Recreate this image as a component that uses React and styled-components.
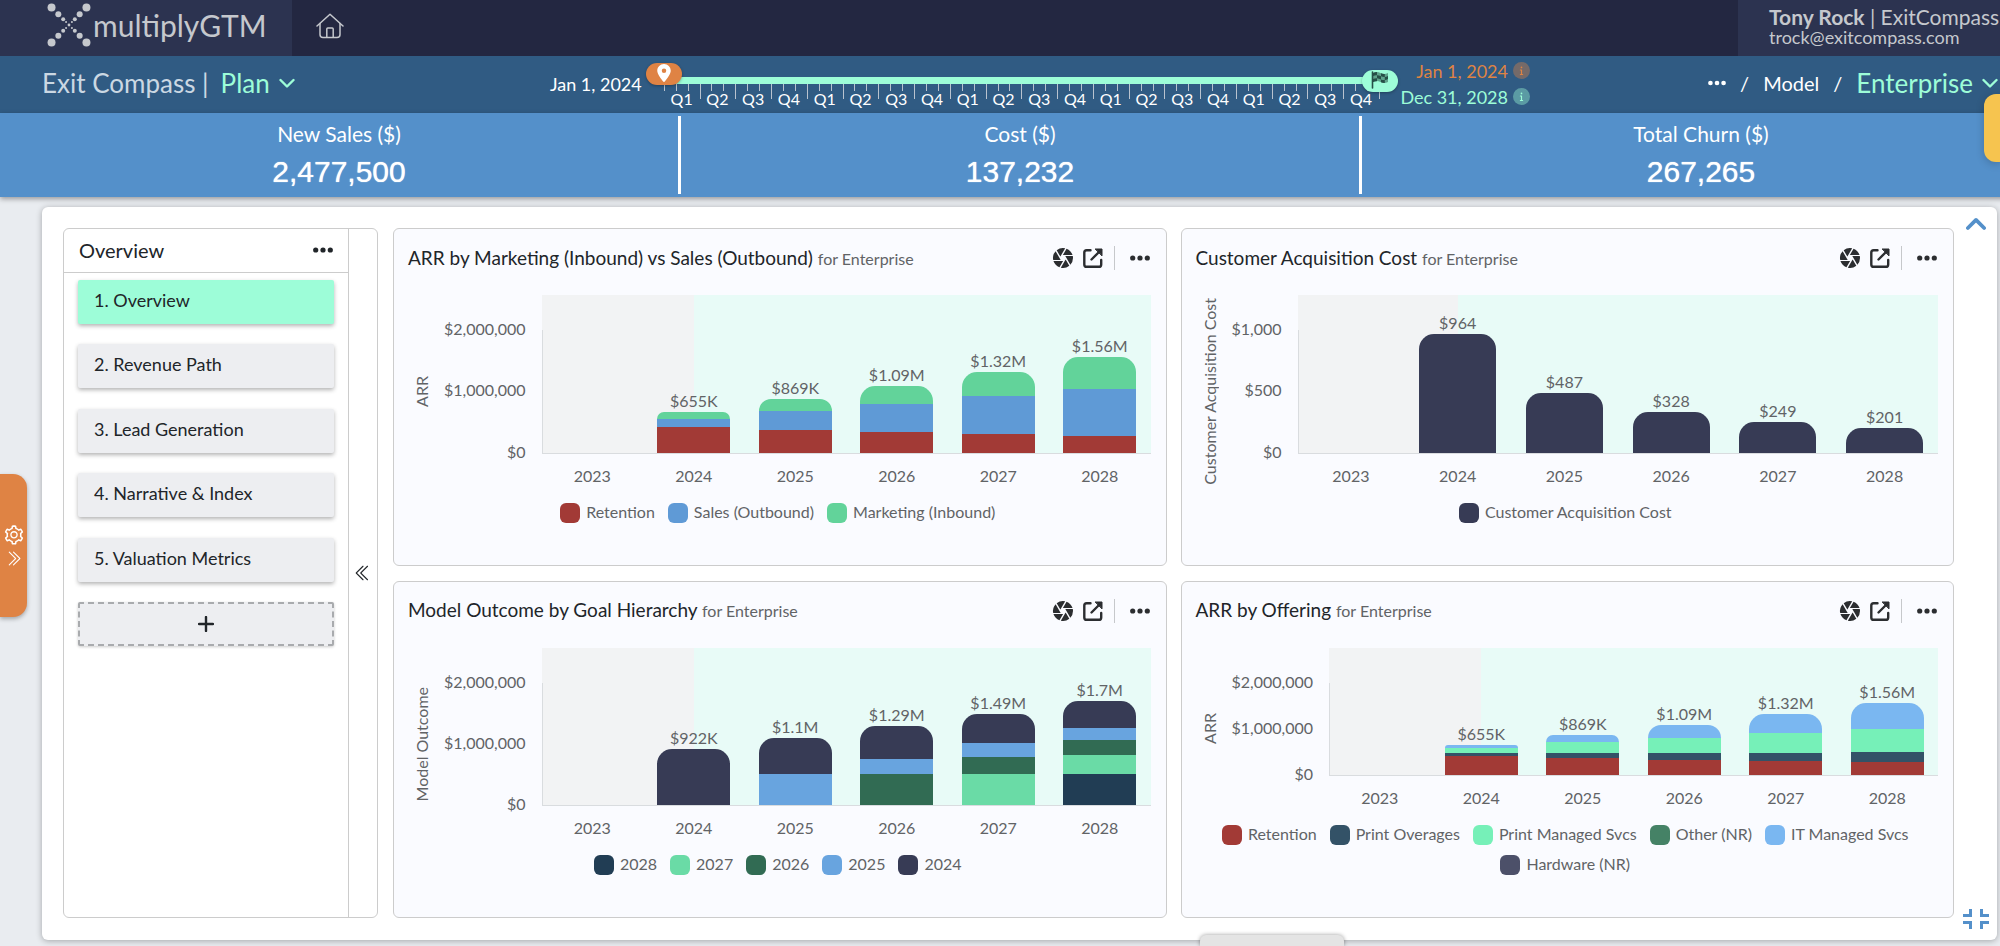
import React from 'react'
import styled, { createGlobalStyle } from 'styled-components'
import { AiOutlineSetting } from 'react-icons/ai'
import { BsChevronDoubleLeft, BsChevronDoubleRight } from 'react-icons/bs'
import { FaInfo, FaLocationDot } from 'react-icons/fa6'
import { MdCamera } from 'react-icons/md'

const quarters = Array.from({ length: 20 }, (_, i) => `Q${(i % 4) + 1}`)
const years = ['2023', '2024', '2025', '2026', '2027', '2028']

const stats = [
  { label: 'New Sales ($)', value: '2,477,500' },
  { label: 'Cost ($)', value: '137,232' },
  { label: 'Total Churn ($)', value: '267,265' },
]

const pages = ['1. Overview', '2. Revenue Path', '3. Lead Generation', '4. Narrative & Index', '5. Valuation Metrics']

// stacks are listed bottom to top, in the unit of `max`
const charts = [
  {
    title: 'ARR by Marketing (Inbound) vs Sales (Outbound)',
    axis: 'ARR',
    ticks: ['$2,000,000', '$1,000,000', '$0'],
    max: 2000,
    series: [
      { name: 'Retention', color: '#a23a36' },
      { name: 'Sales (Outbound)', color: '#5f9ad6' },
      { name: 'Marketing (Inbound)', color: '#62d39a' },
    ],
    bars: [
      null,
      { label: '$655K', stack: [410, 143, 102] },
      { label: '$869K', stack: [374, 298, 197] },
      { label: '$1.09M', stack: [336, 455, 299] },
      { label: '$1.32M', stack: [304, 612, 404] },
      { label: '$1.56M', stack: [276, 764, 520] },
    ],
  },
  {
    title: 'Customer Acquisition Cost',
    axis: 'Customer Acquisition Cost',
    ticks: ['$1,000', '$500', '$0'],
    max: 1000,
    series: [{ name: 'Customer Acquisition Cost', color: '#373b55' }],
    bars: [
      null,
      { label: '$964', stack: [964] },
      { label: '$487', stack: [487] },
      { label: '$328', stack: [328] },
      { label: '$249', stack: [249] },
      { label: '$201', stack: [201] },
    ],
  },
  {
    title: 'Model Outcome by Goal Hierarchy',
    axis: 'Model Outcome',
    ticks: ['$2,000,000', '$1,000,000', '$0'],
    max: 2000,
    series: [
      { name: '2028', color: '#213d54' },
      { name: '2027', color: '#6adba6' },
      { name: '2026', color: '#316b53' },
      { name: '2025', color: '#68a4df' },
      { name: '2024', color: '#373b55' },
    ],
    bars: [
      null,
      { label: '$922K', stack: [0, 0, 0, 0, 922] },
      { label: '$1.1M', stack: [0, 0, 0, 505, 595] },
      { label: '$1.29M', stack: [0, 0, 502, 248, 540] },
      { label: '$1.49M', stack: [0, 505, 272, 228, 485] },
      { label: '$1.7M', stack: [505, 305, 244, 201, 445] },
    ],
  },
  {
    title: 'ARR by Offering',
    axis: 'ARR',
    ticks: ['$2,000,000', '$1,000,000', '$0'],
    max: 2000,
    series: [
      { name: 'Retention', color: '#a23a36' },
      { name: 'Print Overages', color: '#335267' },
      { name: 'Print Managed Svcs', color: '#76f0b8' },
      { name: 'Other (NR)', color: '#458266' },
      { name: 'IT Managed Svcs', color: '#7ab7f1' },
      { name: 'Hardware (NR)', color: '#4c5069' },
    ],
    bars: [
      null,
      { label: '$655K', stack: [410, 60, 115, 0, 70, 0] },
      { label: '$869K', stack: [375, 95, 237, 0, 162, 0] },
      { label: '$1.09M', stack: [332, 151, 317, 0, 290, 0] },
      { label: '$1.32M', stack: [303, 180, 417, 0, 420, 0] },
      { label: '$1.56M', stack: [274, 216, 498, 0, 572, 0] },
    ],
  },
]

const logoDots = [
  [18, 4],
  [11, 3],
  [6, 2],
  [3, 1],
]

const Logo = () => (
  <svg width="44" height="44" viewBox="-22 -22 44 44" fill="currentColor" aria-hidden="true">
    <circle r="1.4" />
    {logoDots.map(([d, r]) =>
      [[-1, -1], [1, -1], [-1, 1], [1, 1]].map(([x, y]) => (
        <circle key={`${d}${x}${y}`} cx={x * d * 0.97} cy={y * d * 0.97} r={r} />
      ))
    )}
  </svg>
)

const HouseIcon = () => (
  <svg width="28" height="26" viewBox="0 0 28 26" fill="none" stroke="currentColor" strokeWidth="1.5" strokeLinecap="round" strokeLinejoin="round">
    <path d="M1 13 14 1.200 27 13" />
    <path d="M4 10.500V21.500Q4 24.500 7 24.500H21Q24 24.500 24 21.500V10.500" />
    <path d="M10.800 24V16Q10.800 15 11.800 15H16.200Q17.200 15 17.200 16V24" />
  </svg>
)

const Chevron = ({ size = 16, up = false, weight = 2.4 }) => (
  <svg width={size} height={size} viewBox="0 0 16 16" fill="none" stroke="currentColor" strokeWidth={weight} strokeLinecap="round" strokeLinejoin="round">
    <path d={up ? 'M1.500 12 8 5.500 14.500 12' : 'M1.500 5 8 11.500 14.500 5'} />
  </svg>
)

const Dots = ({ width = 20 }) => (
  <svg width={width} height="6" viewBox="0 0 20 6" fill="currentColor">
    <circle cx="2.700" cy="3" r="2.600" />
    <circle cx="10" cy="3" r="2.600" />
    <circle cx="17.300" cy="3" r="2.600" />
  </svg>
)

const OpenIcon = () => (
  <svg width="20" height="20" viewBox="0 0 20 20" fill="none" stroke="currentColor" strokeWidth="2.400" strokeLinecap="round">
    <path d="M7.500 2.200H3.700Q1.300 2.200 1.300 4.600V16.400Q1.300 18.800 3.700 18.800H15.800Q18.200 18.800 18.200 16.400V12" />
    <path d="M8.500 11.500 16 4" />
    <path d="M12.500 1H19V7.500Z" fill="currentColor" strokeWidth="1" strokeLinejoin="round" />
  </svg>
)

const FlagIcon = () => (
  <svg width="18" height="18" viewBox="0 0 18 18" aria-hidden="true">
    <path d="M2 2Q6 0 9.500 2T17 2V11Q13 13 9.500 11T2 11Z" fill="#5fa48c" />
    <path d="M2 2Q4 1 6 1V4.200Q4 4 2 5ZM10 2.200Q12 3.200 13.800 3V6Q12 6.200 10 5.300ZM6 4.200Q8 4.400 10 5.300V8.400Q8 7.500 6 7.300ZM13.800 6Q15.500 5.800 17 5V8Q15.500 8.900 13.800 9ZM2 8Q4 7.200 6 7.300V10.300Q4 10.200 2 11ZM10 8.400Q12 9.300 13.800 9V12Q12 12.200 10 11.300Z" fill="#264f47" />
    <path d="M1.500 1V17" stroke="#264f47" strokeWidth="1.600" strokeLinecap="round" />
  </svg>
)

const CompressIcon = () => (
  <svg width="26" height="20" viewBox="0 0 26 20" fill="none" stroke="currentColor" strokeWidth="3">
    <path d="M0 6.500H7.500V0M26 6.500H18.500V0M0 13.500H7.500V20M26 13.500H18.500V20" />
  </svg>
)

const ChartCard = ({ chart }) => (
  <Card>
    <CardHeader>
      <CardTitle>
        {chart.title} <small>for Enterprise</small>
      </CardTitle>
      <IconButton aria-label="Snapshot"><MdCamera size={24} /></IconButton>
      <IconButton aria-label="Open"><OpenIcon /></IconButton>
      <Divider />
      <IconButton aria-label="More"><Dots /></IconButton>
    </CardHeader>
    <Chart>
      <AxisTitle><span>{chart.axis}</span></AxisTitle>
      <Ticks>
        {chart.ticks.map(tick => <span key={tick}>{tick}</span>)}
      </Ticks>
      <Plot>
        {chart.bars.map((bar, i) => (
          <Column key={years[i]}>
            {bar && (
              <>
                <span>{bar.label}</span>
                <Stack style={{ height: `${(bar.stack.reduce((a, b) => a + b, 0) / chart.max) * 100}%` }}>
                  {bar.stack.map((value, s) => value > 0 && (
                    <Segment key={s} $color={chart.series[s].color} style={{ flexGrow: value }} />
                  ))}
                </Stack>
              </>
            )}
          </Column>
        ))}
      </Plot>
      <Years>
        {years.map(year => <span key={year}>{year}</span>)}
      </Years>
    </Chart>
    <Legend>
      {chart.series.map(({ name, color }) => (
        <LegendItem key={name} $color={color}>{name}</LegendItem>
      ))}
    </Legend>
  </Card>
)

const App = () => {
  return (
    <Page>
      <GlobalStyle />

      <TopBar>
        <Brand><Logo />multiplyGTM</Brand>
        <HomeLink href="#" aria-label="Home"><HouseIcon /></HomeLink>
        <User>
          <p><b>Tony Rock</b> | ExitCompass</p>
          <p className="email">trock@exitcompass.com</p>
        </User>
      </TopBar>

      <NavBar>
        <PlanTitle>
          Exit Compass |
          <MenuButton>Plan <Chevron size={16} /></MenuButton>
        </PlanTitle>
        <Timeline>
          <span>Jan 1, 2024</span>
          <Scale>
            <Track />
            <Quarters>
              {quarters.map((quarter, i) => (
                <Quarter key={i}>
                  <i /><i /><i />
                  <span>{quarter}</span>
                </Quarter>
              ))}
            </Quarters>
            <Range $color="#df8344" $top={7} type="range" min="0" max="60" defaultValue="0" aria-label="Start" />
            <Range $color="#9dfdd8" $top={14} type="range" min="0" max="60" defaultValue="60" aria-label="End" />
            <StartMark><FaLocationDot size={18} /></StartMark>
            <EndMark><FlagIcon /></EndMark>
          </Scale>
          <Dates>
            <DateLine $color="#df8344">Jan 1, 2024 <em><FaInfo size={9} /></em></DateLine>
            <DateLine $color="#9dfdd8">Dec 31, 2028 <em><FaInfo size={9} /></em></DateLine>
          </Dates>
        </Timeline>
        <Breadcrumb>
          <IconButton aria-label="More"><Dots width={18} /></IconButton>
          <span>/</span>
          <a href="#">Model</a>
          <span>/</span>
          <MenuButton>Enterprise <Chevron size={16} /></MenuButton>
        </Breadcrumb>
      </NavBar>

      <Stats>
        {stats.map(({ label, value }) => (
          <Stat key={label}>
            <p>{label}</p>
            <strong>{value}</strong>
          </Stat>
        ))}
      </Stats>

      <Panel>
        <Sidebar>
          <SidebarMain>
            <SidebarHeader>
              <h2>Overview</h2>
              <IconButton aria-label="More"><Dots /></IconButton>
            </SidebarHeader>
            <PageList>
              {pages.map((page, i) => (
                <PageButton key={page} $active={i === 0}>{page}</PageButton>
              ))}
              <AddButton aria-label="Add">
                <svg width="16" height="16" viewBox="0 0 16 16" stroke="currentColor" strokeWidth="2.400" strokeLinecap="round">
                  <path d="M8 1V15M1 8H15" />
                </svg>
              </AddButton>
            </PageList>
          </SidebarMain>
          <Collapse aria-label="Collapse"><BsChevronDoubleLeft size={18} /></Collapse>
        </Sidebar>
        <Cards>
          {charts.map(chart => <ChartCard key={chart.title} chart={chart} />)}
        </Cards>
        <Gutter>
          <IconButton aria-label="Scroll up"><Chevron size={20} up weight={3} /></IconButton>
          <IconButton aria-label="Exit full screen"><CompressIcon /></IconButton>
        </Gutter>
      </Panel>

      <SettingsTab aria-label="Settings">
        <AiOutlineSetting size={22} />
        <BsChevronDoubleRight size={17} />
      </SettingsTab>
      <HelpTab aria-label="Help" />
      <BottomTab aria-label="Drawer" />
    </Page>
  )
}

const GlobalStyle = createGlobalStyle`
  * { box-sizing: border-box; }
  body {
    margin: 0;
    background: #e9ecf0;
    color: #212529;
    font-family: Lato, "Open Sans", sans-serif;
    font-size: 18px;
  }
  p, h2, h3 { margin: 0; font-weight: 400; }
  button {
    border: 0;
    padding: 0;
    background: none;
    color: inherit;
    font: inherit;
    cursor: pointer;
  }
  a { color: inherit; text-decoration: none; }
  svg { display: block; flex: none; }
`

const Page = styled.div`
  position: relative;
  display: flex;
  flex-direction: column;
  min-height: 100vh;
  overflow: hidden;
`

const TopBar = styled.header`
  display: flex;
  height: 56px;
  background: #232741;
  color: #c5c8cd;
`

const Brand = styled.div`
  display: flex;
  align-items: center;
  gap: 2px;
  width: 292px;
  padding: 0 0 6px 47px;
  background: #2c3350;
  font-size: 30px;
  line-height: 48px;
`

const HomeLink = styled.a`
  display: flex;
  align-items: center;
  padding: 0 0 4px 24px;
`

const User = styled.div`
  width: 262px;
  margin-left: auto;
  padding: 6px 0 0 31px;
  background: #2c3350;
  font-size: 21px;
  line-height: 22px;
  white-space: nowrap;

  .email {
    font-size: 18px;
    line-height: 18px;
  }
`

const NavBar = styled.nav`
  display: flex;
  height: 57px;
  background: #305b83;
  color: #fff;
  white-space: nowrap;
`

const MenuButton = styled.button`
  display: inline-flex;
  align-items: center;
  gap: 9px;
  color: #9dfdd8;
  font-size: 26px;
`

const PlanTitle = styled.div`
  display: flex;
  align-items: center;
  gap: 12px;
  width: 27.5%;
  padding: 0 0 3px 42px;
  color: #cbd8e3;
  font-size: 26px;
`

const Timeline = styled.div`
  display: flex;
  justify-content: flex-end;
  width: 49%;
  line-height: 56px;
`

const Scale = styled.div`
  position: relative;
  flex: 1;
  margin-left: 4px;
  padding: 21px 18px 0;
  line-height: 20px;
`

const Track = styled.div`
  height: 7px;
  background: #9dfdd8;
`

const Quarters = styled.div`
  display: grid;
  grid-template-columns: repeat(20, 1fr);
  border-right: 1px solid #b9c3cf;
  height: 15px;
`

const Quarter = styled.div`
  display: grid;
  grid-template-columns: repeat(3, 1fr);
  grid-template-rows: 15px 20px;

  i {
    height: 7px;
    border-left: 1px solid #b9c3cf;
  }

  &:not(:first-child) i:first-child {
    height: 15px;
  }

  span {
    grid-column: 1 / -1;
    margin-top: -10px;
    font-size: 16px;
    text-align: center;
  }
`

const Range = styled.input`
  position: absolute;
  top: ${props => props.$top}px;
  left: 0;
  width: 100%;
  height: 22px;
  margin: 0;
  appearance: none;
  background: none;
  pointer-events: none;

  &::-webkit-slider-thumb {
    appearance: none;
    width: 36px;
    height: 22px;
    border-radius: 11px;
    background: ${props => props.$color};
    box-shadow: 0 1px 3px rgba(0, 0, 0, 0.3);
    pointer-events: auto;
  }
`

const StartMark = styled.span`
  position: absolute;
  top: 8px;
  left: 9px;
  pointer-events: none;
`

const EndMark = styled.span`
  position: absolute;
  top: 15px;
  right: 9px;
  pointer-events: none;
`

const Dates = styled.div`
  display: grid;
  align-content: center;
  width: 132px;
  padding-bottom: 2px;
  line-height: 26px;
`

const DateLine = styled.div`
  display: flex;
  align-items: center;
  justify-content: flex-end;
  gap: 5px;
  color: ${props => props.$color};

  em {
    display: grid;
    place-items: center;
    width: 17px;
    height: 17px;
    border-radius: 50%;
    background: color-mix(in srgb, currentColor 40%, transparent);
  }
`

const Breadcrumb = styled.div`
  display: flex;
  flex: 1;
  align-items: center;
  justify-content: flex-end;
  gap: 14px;
  padding: 0 2px 3px 0;
  font-size: 20px;
`

const Stats = styled.section`
  position: relative;
  display: grid;
  grid-template-columns: repeat(3, 1fr);
  width: calc(100% + 43px);
  padding: 3px 0;
  background: #5490ca;
  box-shadow: 0 2px 5px rgba(0, 0, 0, 0.35);
  color: #fff;
  text-align: center;
`

const Stat = styled.div`
  height: 78px;
  padding-top: 5px;
  border-right: 3px solid #fff;
  font-size: 21px;
  line-height: 26px;

  strong {
    display: block;
    margin-top: 7px;
    font: 400 30px/36px "Liberation Sans", Arial, sans-serif;
    text-shadow: 0 0 1px #fff;
  }
`

const Panel = styled.main`
  display: flex;
  flex: 1;
  margin: 10px 3px 6px 42px;
  border-radius: 6px;
  background: #fff;
  box-shadow: 0 1px 6px rgba(0, 0, 0, 0.3);
`

const Sidebar = styled.aside`
  display: flex;
  width: 315px;
  margin: 21px 15px 22px 21px;
  border: 1px solid #ccc;
  border-radius: 6px;
`

const SidebarMain = styled.div`
  flex: 1;
  border-right: 1px solid #ccc;
`

const SidebarHeader = styled.div`
  display: flex;
  align-items: center;
  justify-content: space-between;
  height: 44px;
  padding: 0 15px 2px;
  border-bottom: 1px solid #ccc;

  h2 { font-size: 20px; }
`

const PageList = styled.div`
  display: flex;
  flex-direction: column;
  justify-content: space-between;
  height: 380px;
  padding: 7px 14px;
`

const PageButton = styled.button`
  height: 44px;
  padding: 0 16px 4px;
  border-radius: 2px;
  background: ${props => (props.$active ? '#9dfdd8' : '#edeef1')};
  box-shadow: 0 2px 4px rgba(0, 0, 0, 0.3);
  text-align: left;
`

const AddButton = styled.button`
  display: grid;
  place-items: center;
  height: 44px;
  border: 2px dashed #a9abae;
  border-radius: 2px;
  background: #edeef1;
  box-shadow: 0 1px 3px rgba(0, 0, 0, 0.2);
`

const Collapse = styled.button`
  display: grid;
  place-items: center;
  width: 28px;
`

const Cards = styled.div`
  display: grid;
  flex: 1;
  grid-template-columns: repeat(2, minmax(0, 1fr));
  grid-auto-rows: minmax(337px, 1fr);
  gap: 15px 14px;
  padding: 21px 0 22px;
`

const Gutter = styled.div`
  display: flex;
  flex-direction: column;
  align-items: center;
  justify-content: space-between;
  width: 43px;
  padding: 6px 0 11px;
  color: #5490ca;
`

const IconButton = styled.button`
  display: grid;
  place-items: center;
`

const Card = styled.article`
  display: flex;
  flex-direction: column;
  padding-bottom: 42px;
  border: 1px solid #ccc;
  border-radius: 6px;
  background: #fafbff;
  color: #616366;
  font-size: 16px;
  line-height: 20px;
`

const CardHeader = styled.div`
  display: flex;
  align-items: center;
  gap: 8px;
  height: 24px;
  margin: 17px 16px 25px 14px;
  color: #2b2d30;
`

const CardTitle = styled.h3`
  flex: 1;
  color: #212529;
  font-size: 19px;
  white-space: nowrap;

  small {
    color: #616366;
    font-size: 16px;
  }
`

const Divider = styled.span`
  width: 1px;
  height: 24px;
  margin: 0 7px 0 3px;
  background: #c6c8cb;
`

const Chart = styled.div`
  display: grid;
  flex: 1;
  grid-template-columns: 20px auto 1fr;
  grid-template-rows: minmax(0, 1fr) 20px;
  row-gap: 13px;
  padding: 0 15px 0 18px;
`

// size containment keeps a long title or a tall bar from stretching the card
const AxisTitle = styled.div`
  display: flex;
  align-items: center;
  justify-content: center;
  contain: size;
  margin-top: 35px;

  span {
    flex: none;
    transform: rotate(180deg);
    writing-mode: vertical-rl;
    white-space: nowrap;
  }
`

const Ticks = styled.div`
  display: flex;
  flex-direction: column;
  justify-content: space-between;
  margin: 24px 16px -9px 12px;
  text-align: right;
`

const Plot = styled.div`
  position: relative;
  display: grid;
  grid-template-columns: repeat(6, 1fr);
  contain: size;
  padding-top: 35px;
  background: linear-gradient(to right, #f2f3f4 25%, #e8fbf7 25%);
  box-shadow: 0 1px #d9dcdf;

  &::before {
    content: '';
    position: absolute;
    top: 35px;
    bottom: 0;
    left: 0;
    width: 1px;
    background: #d9dcdf;
  }
`

const Column = styled.div`
  display: flex;
  flex-direction: column;
  align-items: center;
  justify-content: flex-end;
  min-height: 0;

  span { margin-bottom: 1px; }
`

const Stack = styled.div`
  display: flex;
  flex: none;
  flex-direction: column-reverse;
  width: 72%;
`

const Segment = styled.div`
  flex-basis: 0;
  background: ${props => props.$color};

  &:last-child {
    border-radius: 15px 15px 0 0;
  }
`

const Years = styled.div`
  display: grid;
  grid-column: 3;
  grid-template-columns: repeat(6, 1fr);
  text-align: center;
`

const Legend = styled.div`
  display: flex;
  flex-wrap: wrap;
  justify-content: center;
  gap: 10px 13px;
  margin-top: 17px;
  padding: 0 32px 0 28px;
`

const LegendItem = styled.span`
  display: flex;
  gap: 6px;
  height: 20px;
  line-height: 18px;

  &::before {
    content: '';
    width: 20px;
    height: 20px;
    border-radius: 6px;
    background: ${props => props.$color};
  }
`

const SettingsTab = styled.button`
  position: absolute;
  top: 474px;
  left: 0;
  display: flex;
  flex-direction: column;
  align-items: center;
  justify-content: center;
  gap: 4px;
  width: 27px;
  height: 143px;
  border-radius: 0 14px 14px 0;
  background: #df8344;
  box-shadow: 0 2px 4px rgba(0, 0, 0, 0.3);
  color: #fff;
`

const HelpTab = styled.button`
  position: absolute;
  top: 94px;
  right: 0;
  width: 16px;
  height: 68px;
  border-radius: 12px 0 0 12px;
  background: #f6c44f;
  box-shadow: 0 2px 8px rgba(0, 0, 0, 0.2);
`

const BottomTab = styled.button`
  position: absolute;
  bottom: 0;
  left: 60%;
  width: 144px;
  height: 11px;
  border-radius: 6px 6px 0 0;
  background: #e4e4e4;
  box-shadow: 0 0 4px rgba(0, 0, 0, 0.4);
`

export default App
